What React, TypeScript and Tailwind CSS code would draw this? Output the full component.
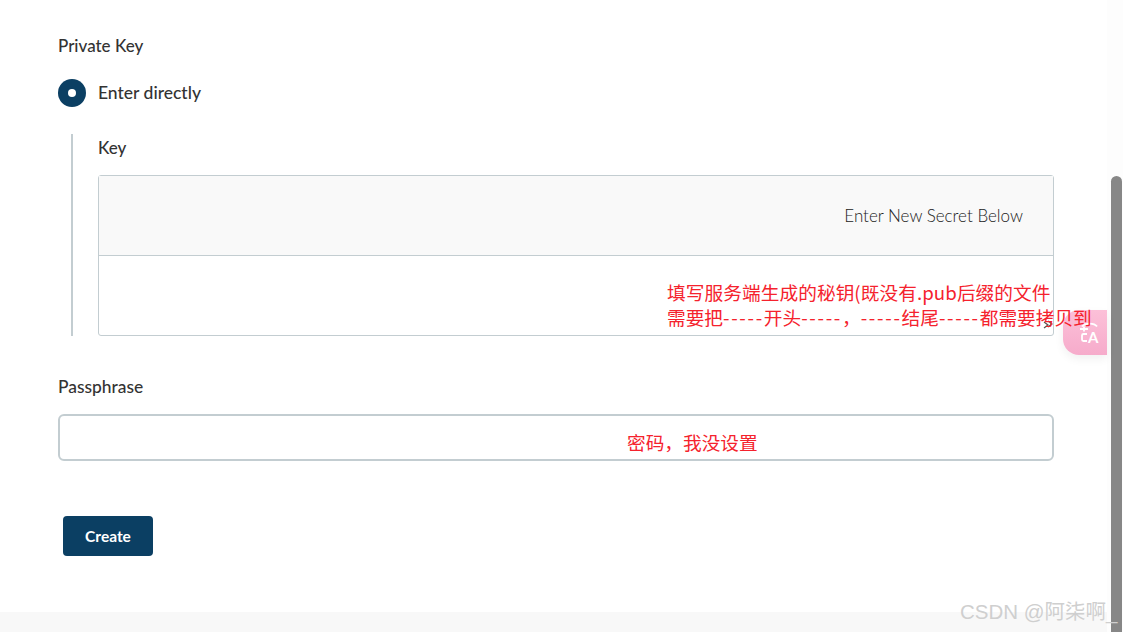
import React from 'react';

const CJK = "font-['Noto_Sans_CJK_SC','Noto_Sans',sans-serif]";

const App: React.FC = () => {
  return (
    <div className="relative flex h-[632px] w-[1123px] overflow-hidden bg-white font-['Lato',sans-serif] text-[17px] text-[#333]">
      <div className="flex min-w-0 flex-1 flex-col">
        <div className="flex-1 pl-[58px] pr-[53px] pt-[34px]">
          <div className="h-[24px] font-medium leading-[24px]">Private Key</div>

          <div className="mt-[21px] flex h-[28px] items-center gap-[12px]">
            <div className="flex h-[28px] w-[28px] items-center justify-center rounded-full bg-[#0b3f63]">
              <div className="h-[8px] w-[8px] rounded-full bg-white"></div>
            </div>
            <span className="text-[17.5px] font-medium">Enter directly</span>
          </div>

          <div className="ml-[13px] mt-[27px] h-[202px] border-l-[2px] border-[#c3cdd1] pl-[25px]">
            <div className="h-[28px] font-medium leading-[28px]">Key</div>
            <div className="mt-[13px] flex h-[161px] flex-col rounded-[3px] border border-[#c3cdd1]">
              <div className="flex h-[80px] items-center justify-end border-b border-[#c3cdd1] bg-[#f9f9f9] pr-[30px] text-[17px] font-light text-[#222]">
                Enter New Secret Below
              </div>
              <div className="flex-1"></div>
            </div>
          </div>

          <div className="mt-[39px] h-[24px] text-[17.4px] font-medium leading-[24px]">Passphrase</div>
          <div className="mt-[15px] h-[47px] rounded-[6px] border-[2px] border-[#c3cdd1]"></div>

          <button className="ml-[5px] mt-[55px] h-[40px] w-[90px] rounded-[4px] bg-[#0b3f63] pt-[1px] text-[15.5px] font-bold text-white">
            Create
          </button>
        </div>
        <div className="h-[20px] bg-[#f8f8f8]"></div>
      </div>

      <div className="flex w-[16px] flex-col bg-[#fdfdfd] pl-[4px] pr-[1px] pt-[176px]">
        <div className="flex-1 rounded-t-[6px] bg-[#878787]"></div>
      </div>

      {/* translate widget */}
      <div className="absolute left-[1063px] top-[310px] h-[45px] w-[44px] rounded-l-[16px] bg-gradient-to-b from-[#fcc0d8] to-[#f6abcb] shadow-[0_4px_10px_rgba(0,0,0,0.06)]">
        <svg className="absolute left-[16px] top-[10px]" width="24" height="24" viewBox="0 0 24 24" fill="none" stroke="white" strokeWidth="1.8">
          <path d="M3 6.500a8 4.500 0 0 1 15 0M1 9h8M5 6.500v5M8 14H4.500a1.500 1.500 0 0 0-1.500 1.500v4A1.500 1.500 0 0 0 4.500 21H8" />
        </svg>
        <span className="absolute left-[25px] top-[20px] text-[15px] font-bold leading-[14px] text-white">A</span>
      </div>

      {/* resize grip */}
      <svg className="absolute left-[1042px] top-[319px]" width="12" height="11" viewBox="0 0 12 11" fill="none" stroke="#555" strokeWidth="1.2">
        <path d="M2 3l4 3-4 3M6 2l4 3-4 3" />
      </svg>

      {/* red notes on the screenshot */}
      <div className={`absolute left-[667px] top-[279px] whitespace-nowrap text-[18.67px] leading-[25px] text-[#f5222d] ${CJK}`}>
        <div className="tracking-[0.08px]">填写服务端生成的秘钥(既没有.pub后缀的文件</div>
        <div>
          需要把<span className="tracking-[1.7px]">-----</span>开头<span className="tracking-[1.7px]">-----</span>，<span className="tracking-[1.7px]">-----</span>结尾<span className="tracking-[1.7px]">-----</span>都需要拷贝到
        </div>
      </div>
      <div className={`absolute left-[627px] top-[429px] whitespace-nowrap text-[18.67px] leading-[25px] text-[#f5222d] ${CJK}`}>
        密码，我没设置
      </div>

      <div className="absolute left-[960px] top-[598px] whitespace-nowrap font-['Liberation_Sans','Noto_Sans_CJK_SC',sans-serif] text-[20.5px] leading-[28px] text-[#cfcfcf]">
        CSDN @阿柒啊_
      </div>
    </div>
  );
};

export default App;
